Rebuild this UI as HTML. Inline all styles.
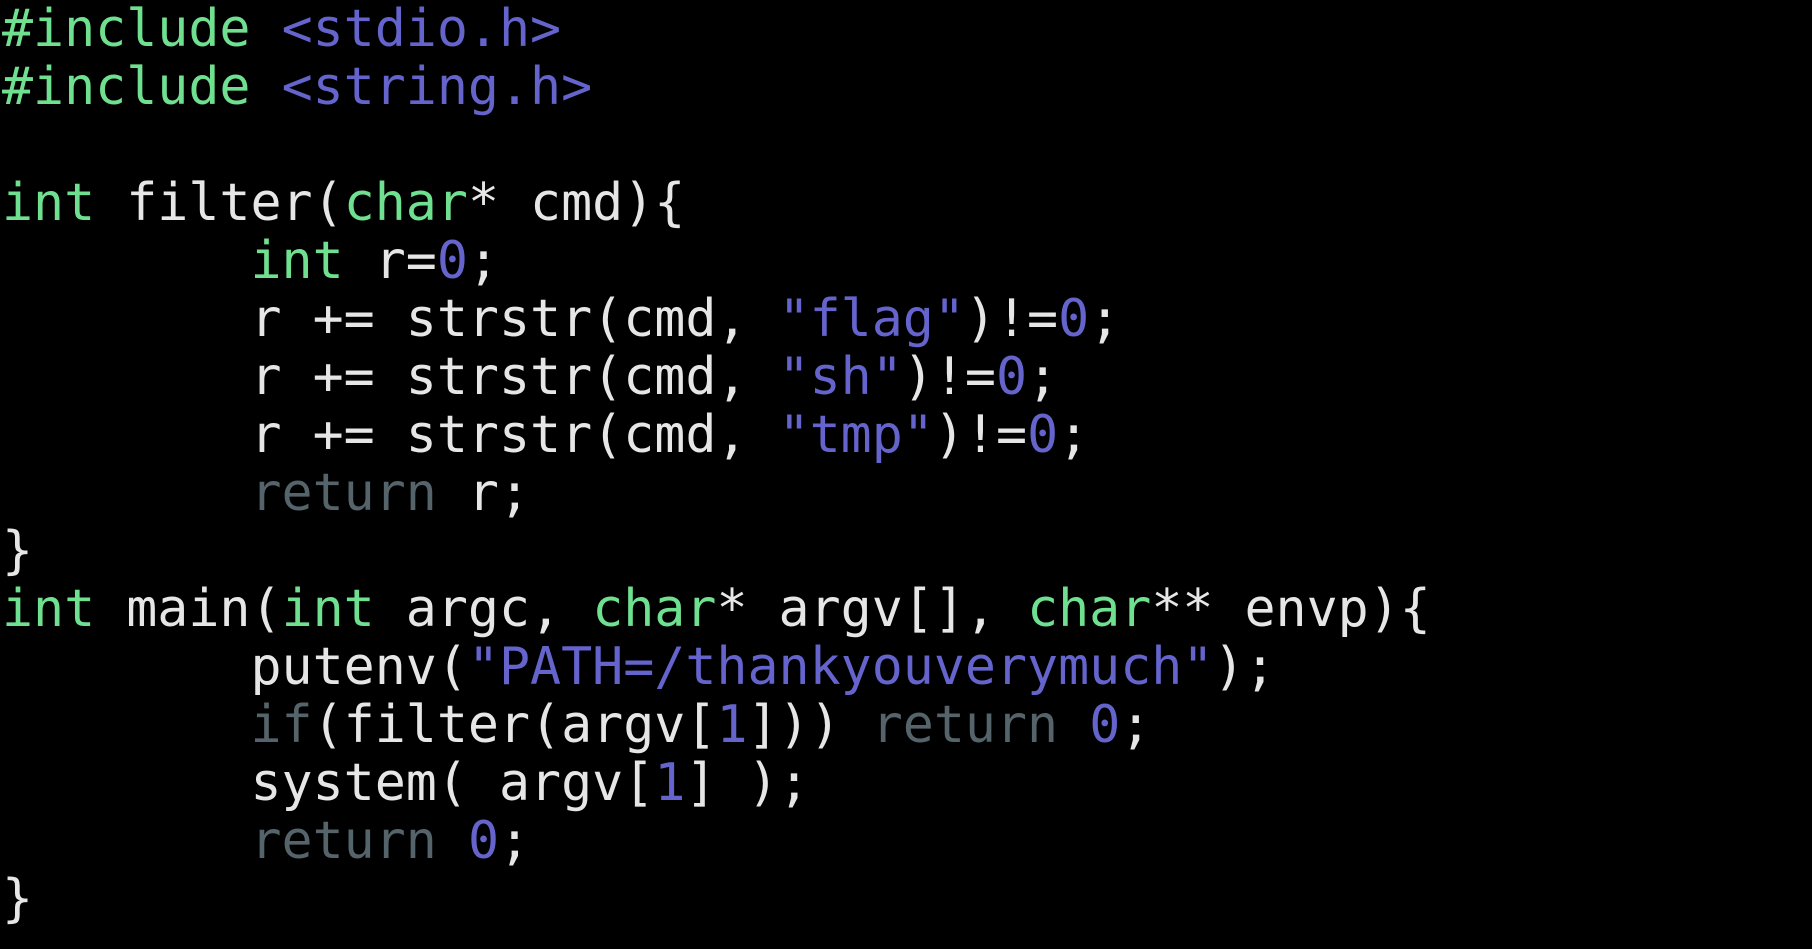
<!DOCTYPE html>
<html><head><style>
html,body{margin:0;padding:0;background:#000;width:1812px;height:949px;overflow:hidden}
pre{margin:0;padding:0 0 0 2px;font-family:"DejaVu Sans Mono","Liberation Mono",monospace;font-size:51.6px;line-height:58px;color:#e6e6e6}
.g{color:#6fe090}.b{color:#6464cc}.r{color:#55636a}
</style></head><body><pre><span class="g">#include</span> <span class="b">&lt;stdio.h&gt;</span>
<span class="g">#include</span> <span class="b">&lt;string.h&gt;</span>

<span class="g">int</span> filter(<span class="g">char</span>* cmd){
        <span class="g">int</span> r=<span class="b">0</span>;
        r += strstr(cmd, <span class="b">"flag"</span>)!=<span class="b">0</span>;
        r += strstr(cmd, <span class="b">"sh"</span>)!=<span class="b">0</span>;
        r += strstr(cmd, <span class="b">"tmp"</span>)!=<span class="b">0</span>;
        <span class="r">return</span> r;
}
<span class="g">int</span> main(<span class="g">int</span> argc, <span class="g">char</span>* argv[], <span class="g">char</span>** envp){
        putenv(<span class="b">"PATH=/thankyouverymuch"</span>);
        <span class="r">if</span>(filter(argv[<span class="b">1</span>])) <span class="r">return</span> <span class="b">0</span>;
        system( argv[<span class="b">1</span>] );
        <span class="r">return</span> <span class="b">0</span>;
}
</pre></body></html>
